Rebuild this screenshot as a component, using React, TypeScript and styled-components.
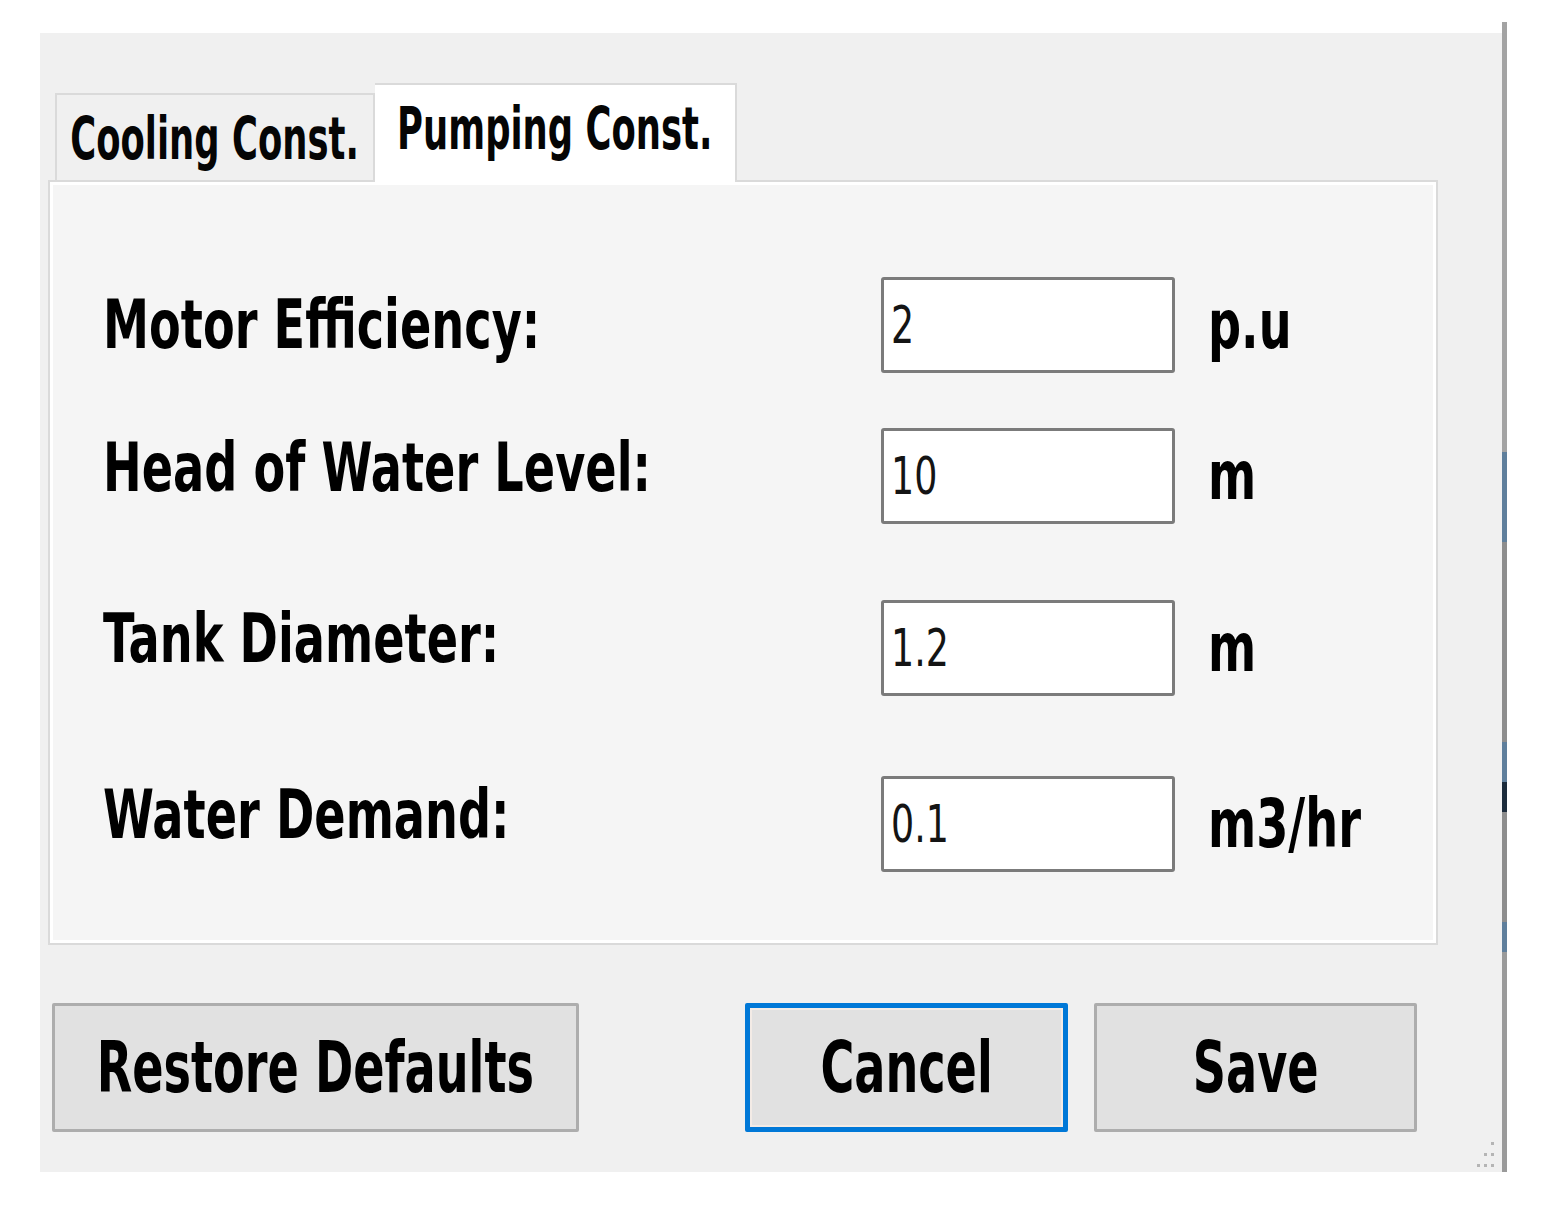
import React from 'react';
import styled, { createGlobalStyle } from 'styled-components';

const GlobalStyle = createGlobalStyle`
  body {
    margin: 0;
    background: #ffffff;
    font-family: "DejaVu Sans", "Liberation Sans", sans-serif;
  }
`

const Frame = styled.div`
  display: flex;
  align-items: flex-end;
  margin: 22px 0 0 40px;
  width: 1467px;
`

const Dialog = styled.div`
  position: relative;
  box-sizing: border-box;
  width: 1462px;
  height: 1139px;
  padding-top: 50px;
  background: #f0f0f0;
  display: flex;
  flex-direction: column;
`

// the dark window edge with its bluish streaks
const Edge = styled.div`
  width: 5px;
  height: 1150px;
  background: linear-gradient(
    to bottom,
    #a3a3a3 0px,
    #a3a3a3 430px,
    #5f7f9c 430px,
    #5f7f9c 520px,
    #8d8d8d 520px,
    #8d8d8d 720px,
    #5f7f9c 720px,
    #5f7f9c 760px,
    #1c2c3c 760px,
    #1c2c3c 790px,
    #8d8d8d 790px,
    #8d8d8d 900px,
    #5f7f9c 900px,
    #5f7f9c 930px,
    #9a9a9a 930px
  );
`

const TabRow = styled.div`
  display: flex;
  align-items: flex-end;
  margin-left: 15px;
  height: 97px;
  position: relative;
  z-index: 1;
`

const Tab = styled.div<{ $active?: boolean }>`
  box-sizing: border-box;
  width: ${(p) => (p.$active ? '362px' : '320px')};
  height: ${(p) => (p.$active ? '99px' : '87px')};
  margin-bottom: ${(p) => (p.$active ? '-2px' : '0')};
  background: ${(p) => (p.$active ? '#ffffff' : '#f0f0f0')};
  border: 2px solid #dadada;
  border-bottom: none;
  border-left: ${(p) => (p.$active ? 'none' : '2px solid #dadada')};
  display: flex;
  justify-content: center;
  padding-top: 14px;
`

const Squeeze = styled.span<{ $scale: number; $origin?: string }>`
  display: inline-block;
  white-space: nowrap;
  transform: scaleX(${(p) => p.$scale});
  transform-origin: ${(p) => p.$origin || 'left center'};
`

const TabText = styled(Squeeze)`
  font-size: 59px;
  font-weight: bold;
  line-height: 1;
  color: #050505;
`

const Panel = styled.div`
  box-sizing: border-box;
  width: 1390px;
  height: 765px;
  margin-left: 8px;
  padding: 95px 0 0 53px;
  background: #f5f5f5;
  border: 2px solid #dadada;
  box-shadow: inset 0 0 0 3px #ffffff;
`

const Row = styled.div<{ $space: number }>`
  display: grid;
  grid-template-columns: 778px 294px auto;
  align-items: center;
  height: 96px;
  margin-top: ${(p) => p.$space}px;
`

const Label = styled(Squeeze)<{ $lift: number }>`
  font-size: 68px;
  font-weight: bold;
  line-height: 1;
  color: #000000;
  transform: translateY(-${(p) => p.$lift}px) scaleX(${(p) => p.$scale});
`

const Field = styled.div`
  box-sizing: border-box;
  height: 96px;
  padding-left: 7px;
  background: #ffffff;
  border: 3px solid #7b7b7b;
  border-radius: 3px;
  display: flex;
  align-items: center;
`

const Value = styled(Squeeze)`
  font-size: 52px;
  line-height: 1;
  color: #141414;
`

const UnitCell = styled.div`
  padding-left: 33px;
`

const Unit = styled(Squeeze)`
  font-size: 68px;
  font-weight: bold;
  line-height: 1;
  color: #000000;
`

const ButtonRow = styled.div`
  display: flex;
  margin-top: 58px;
  padding-left: 12px;
`

const Button = styled.button<{ $wide?: boolean; $focused?: boolean; $gap: number }>`
  box-sizing: border-box;
  width: ${(p) => (p.$wide ? '527px' : '323px')};
  height: 129px;
  margin-left: ${(p) => p.$gap}px;
  padding: 0;
  background: #e1e1e1;
  border: ${(p) => (p.$focused ? '5px solid #0078d7' : '3px solid #adadad')};
  box-shadow: ${(p) => (p.$focused ? 'inset 0 0 0 2px #f3ebe6' : 'none')};
  border-radius: 2px;
  display: flex;
  justify-content: center;
  align-items: center;
  font-family: inherit;
  cursor: default;
`

const ButtonText = styled(Squeeze)`
  font-size: 71px;
  font-weight: bold;
  line-height: 1;
  color: #000000;
`

const Grip = styled.svg`
  position: absolute;
  right: 6px;
  bottom: 2px;
`

const fields = [
  { label: 'Motor Efficiency:', value: '2', unit: 'p.u', space: 0, lift: 0 },
  { label: 'Head of Water Level:', value: '10', unit: 'm', space: 55, lift: 8 },
  { label: 'Tank Diameter:', value: '1.2', unit: 'm', space: 76, lift: 9 },
  { label: 'Water Demand:', value: '0.1', unit: 'm3/hr', space: 80, lift: 9 },
];

export default function App() {
  return (
    <>
      <GlobalStyle />
      <Frame>
        <Dialog>
          <TabRow>
            <Tab>
              <TabText $scale={0.6} $origin="center">Cooling Const.</TabText>
            </Tab>
            <Tab $active>
              <TabText $scale={0.6} $origin="center">Pumping Const.</TabText>
            </Tab>
          </TabRow>
          <Panel>
            {fields.map((f) => (
              <Row key={f.label} $space={f.space}>
                <Label $scale={0.68} $lift={f.lift}>{f.label}</Label>
                <Field>
                  <Value $scale={0.7}>{f.value}</Value>
                </Field>
                <UnitCell>
                  <Unit $scale={0.68}>{f.unit}</Unit>
                </UnitCell>
              </Row>
            ))}
          </Panel>
          <ButtonRow>
            <Button $wide $gap={0}>
              <ButtonText $scale={0.65} $origin="center">Restore Defaults</ButtonText>
            </Button>
            <Button $focused $gap={166}>
              <ButtonText $scale={0.65} $origin="center">Cancel</ButtonText>
            </Button>
            <Button $gap={26}>
              <ButtonText $scale={0.65} $origin="center">Save</ButtonText>
            </Button>
          </ButtonRow>
          <Grip width="26" height="30" viewBox="0 0 26 30">
            <rect x="21" y="2" width="3" height="3" fill="#b5b5b5" />
            <rect x="14" y="13" width="3" height="3" fill="#b5b5b5" />
            <rect x="21" y="13" width="3" height="3" fill="#b5b5b5" />
            <rect x="7" y="24" width="3" height="3" fill="#b5b5b5" />
            <rect x="14" y="24" width="3" height="3" fill="#b5b5b5" />
            <rect x="21" y="24" width="3" height="3" fill="#b5b5b5" />
          </Grip>
        </Dialog>
        <Edge />
      </Frame>
    </>
  );
}
